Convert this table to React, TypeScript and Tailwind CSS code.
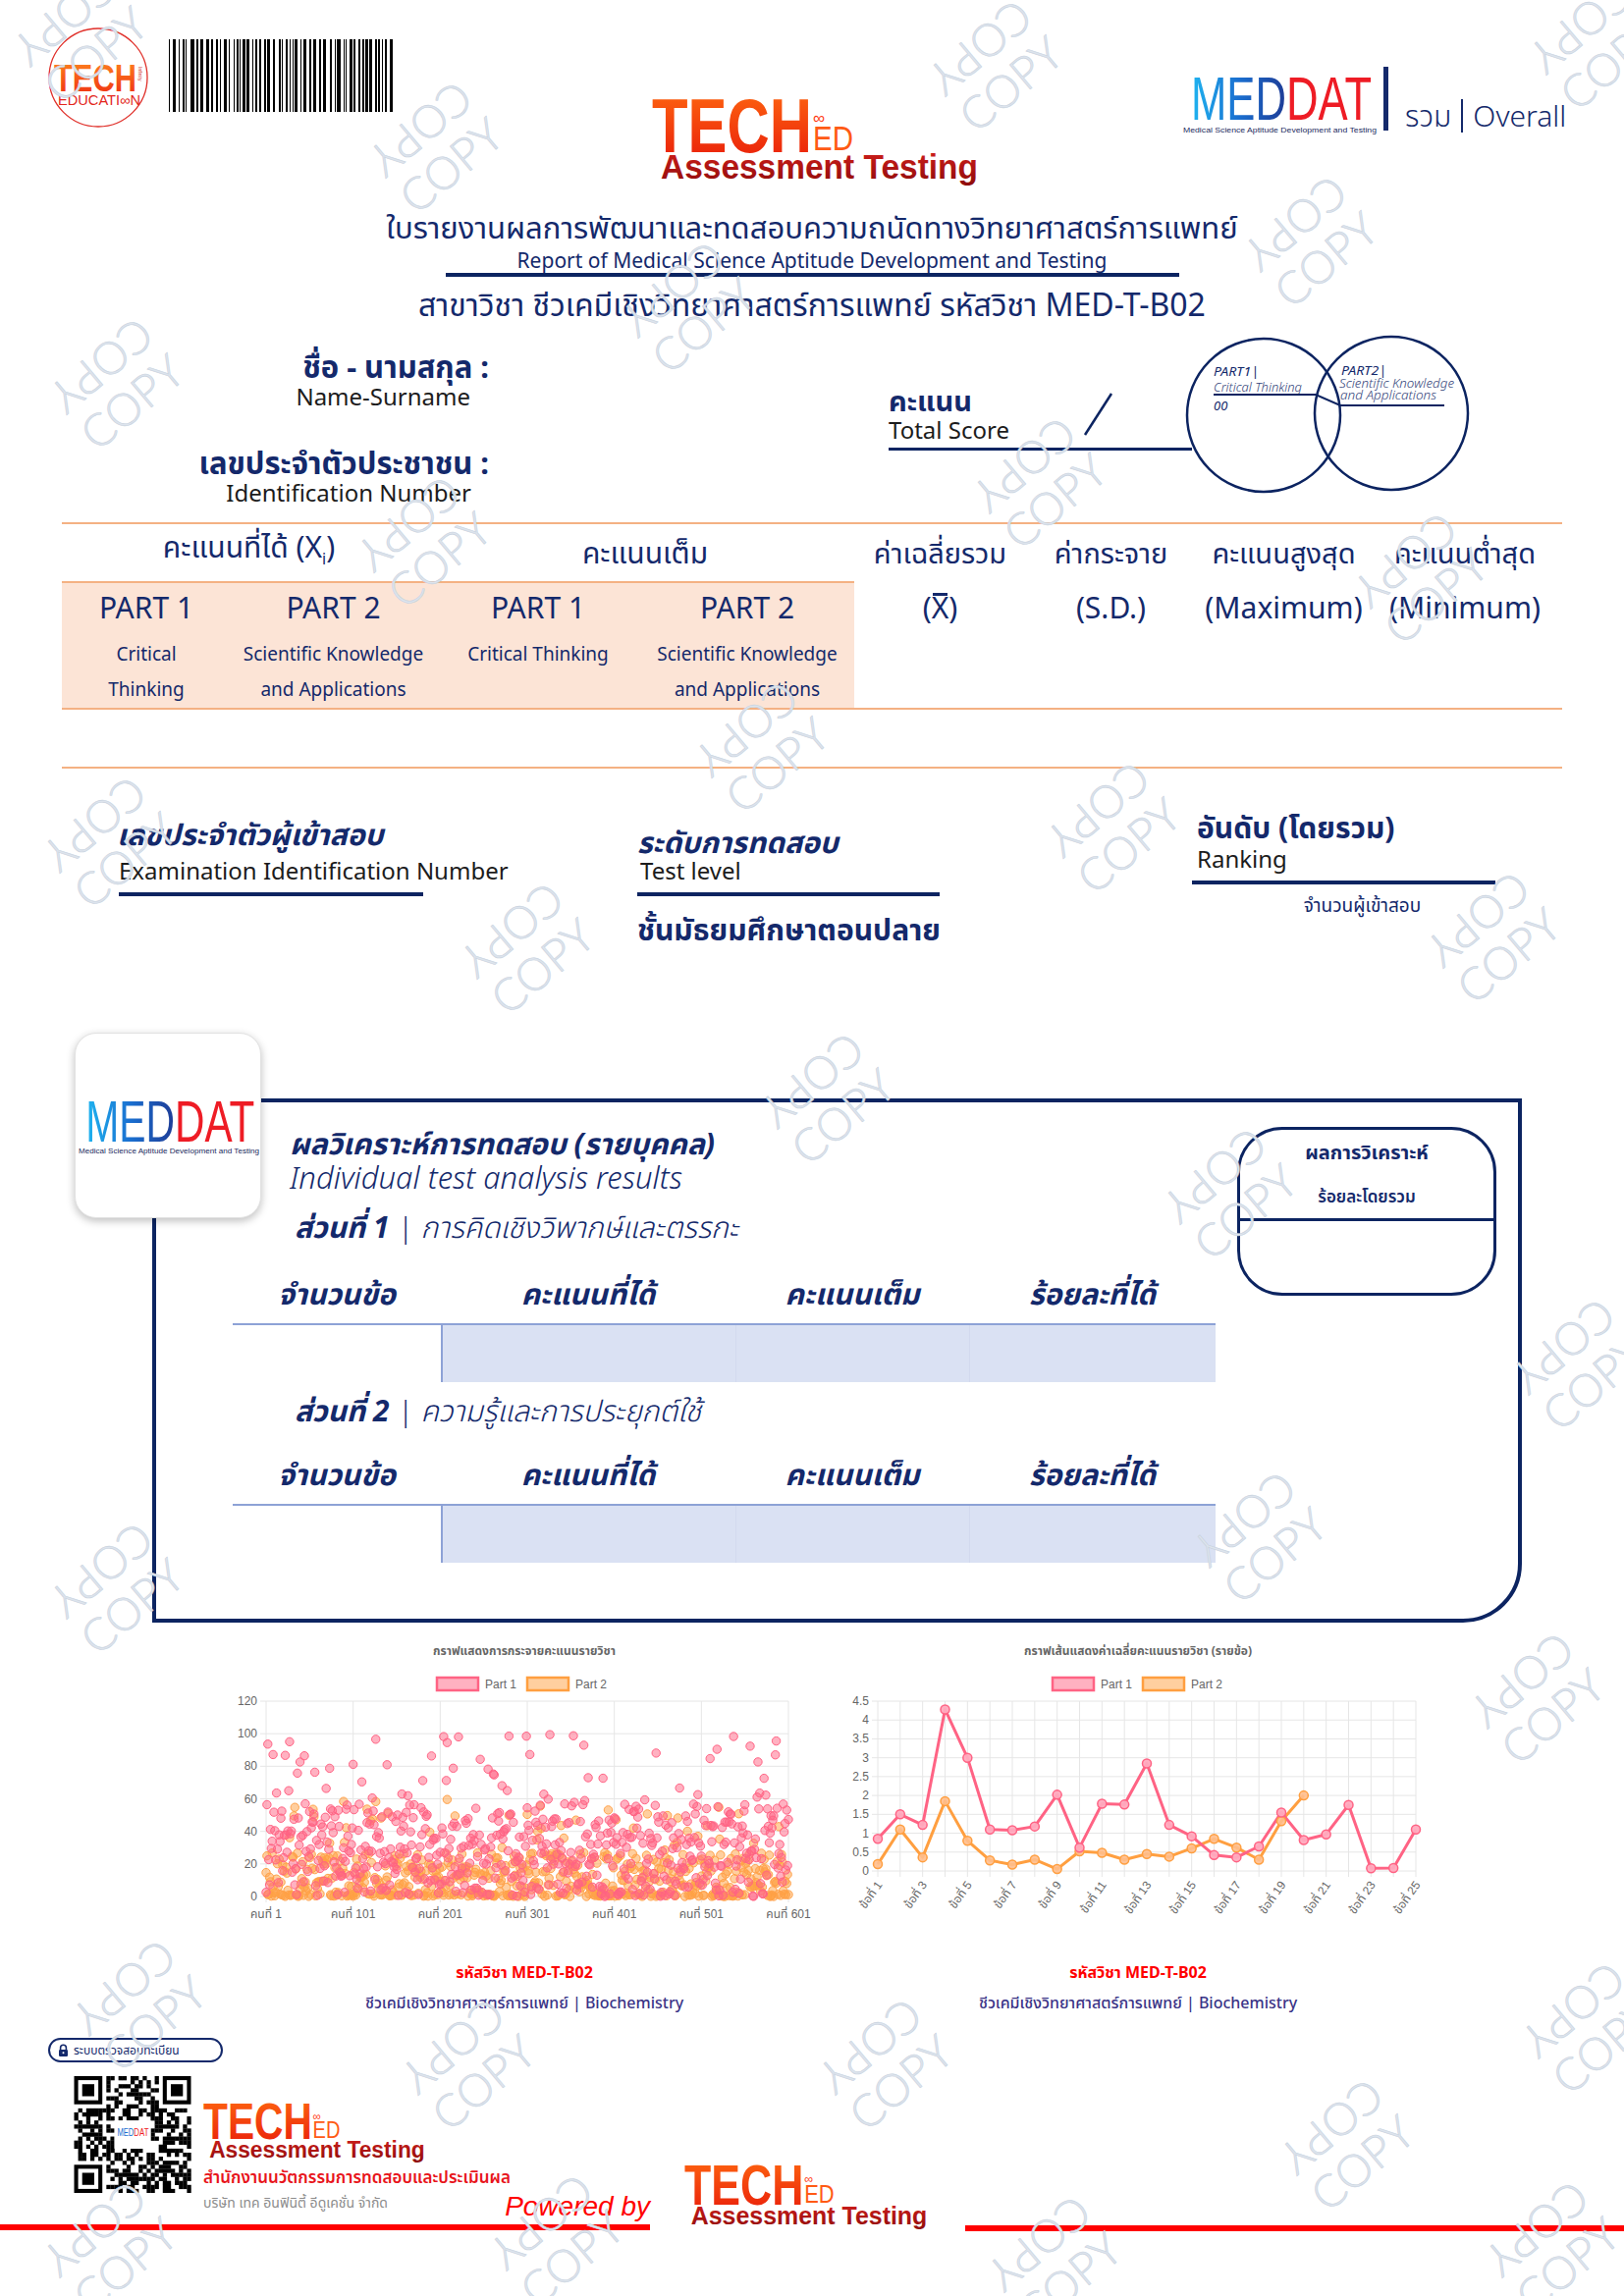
import React from 'react';

// deterministic pseudo random, so the drawing is the same on every load
function rng(seed: number) {
  let s = seed >>> 0;
  return () => {
    s = (s * 1664525 + 1013904223) % 4294967296;
    return s / 4294967296;
  };
}

const part1Avg = [0.85, 1.5, 1.22, 4.28, 3.0, 1.1, 1.08, 1.18, 2.02, 0.62, 1.78, 1.76, 2.85, 1.22, 0.92, 0.42, 0.36, 0.65, 1.55, 0.82, 0.97, 1.75, 0.07, 0.08, 1.1];
const part2Avg = [0.18, 1.1, 0.36, 1.85, 0.8, 0.28, 0.17, 0.3, 0.05, 0.52, 0.48, 0.3, 0.45, 0.38, 0.6, 0.85, 0.62, 0.3, 1.32, 2.0];

const scatter = (() => {
  const r = rng(2024);
  const p1: number[] = [];
  const p2: number[] = [];
  for (let i = 0; i < 601; i++) {
    const a = r();
    let v1: number;
    if (a < 0.08) v1 = r() * 3;
    else if (a < 0.2) v1 = 55 + r() * 45;
    else v1 = 3 + r() * 54;
    p1.push(v1);
    const b = r();
    let v2: number;
    if (b < 0.2) v2 = r() * 1.5;
    else if (b < 0.26) v2 = 28 + r() * 32;
    else v2 = 27 * Math.pow(r(), 1.15);
    p2.push(v2);
  }
  return { p1, p2 };
})();

const watermarks: [number, number][] = [
  [82, 37], [444, 150], [1014, 67], [1626, 45], [1335, 246], [119, 391], [701, 313],
  [1059, 492], [432, 552], [1447, 589], [776, 761], [112, 858], [1134, 843], [537, 966],
  [1521, 955], [843, 1119], [1253, 1216], [1608, 1390], [1283, 1566],
  [119, 1618], [1566, 1730], [142, 2043], [477, 2103], [902, 2103], [1372, 2185],
  [1618, 2066], [112, 2289], [567, 2282], [1074, 2304], [1581, 2289],
];

const thaiFont = 'Noto Sans, Noto Sans Thai, Liberation Sans, sans-serif';
const chartFont = 'Liberation Sans, Arial, Noto Sans Thai, sans-serif';

function Watermark({ x, y }: { x: number; y: number }) {
  return (
    <div
      className="pointer-events-none absolute w-[150px] -rotate-[40deg] text-center [font-family:'Lato','Liberation_Sans',sans-serif] text-[46px] font-light leading-[48px] text-[#dde4ed] [-webkit-text-stroke:0.6px_#c8d2de]"
      style={{ left: x - 75, top: y - 48 }}
    >
      <div className="rotate-180">COPY</div>
      <div>COPY</div>
    </div>
  );
}

function TechEduBadge() {
  return (
    <svg width="102" height="102" viewBox="0 0 102 102" className="block">
      <defs>
        <linearGradient id="teg" x1="0" y1="0" x2="0" y2="1">
          <stop offset="0" stopColor="#ff8a1f" />
          <stop offset="1" stopColor="#ee2a12" />
        </linearGradient>
      </defs>
      <circle cx="51" cy="51" r="50" fill="#fff" stroke="#e0302a" strokeWidth="1.3" />
      <text x="6" y="65" fontSize="39" fontWeight="700" textLength="84" lengthAdjust="spacingAndGlyphs" fill="url(#teg)" fontFamily={chartFont}>
        TECH
      </text>
      <text x="92" y="40" fontSize="5" fill="#d0302a" transform="rotate(90 92 40)" fontFamily={chartFont}>
        Infinity
      </text>
      <text x="10" y="79" fontSize="14" textLength="84" lengthAdjust="spacingAndGlyphs" fill="#e3261a" fontFamily={chartFont}>
        EDUCATI∞N
      </text>
    </svg>
  );
}

function Barcode() {
  const r = rng(7);
  const bars: { x: number; w: number }[] = [];
  let x = 0;
  while (x < 228) {
    const w = 1 + Math.floor(r() * 3.4);
    bars.push({ x, w: Math.min(w, 232 - x) });
    x += w + 1 + Math.floor(r() * 3.2);
  }
  return (
    <svg width="232" height="74" viewBox="0 0 232 74" className="block">
      {bars.map((b, i) => (
        <rect key={i} x={b.x} y={0} width={b.w} height={74} fill="#000" />
      ))}
    </svg>
  );
}

function TechLogo({ s }: { s: number }) {
  return (
    <svg width={340 * s} height={92 * s} viewBox="0 0 340 92" className="block overflow-visible">
      <defs>
        <linearGradient id="tlTech" x1="0" y1="0" x2="0" y2="1">
          <stop offset="0" stopColor="#ff6a10" />
          <stop offset="1" stopColor="#e81a0a" />
        </linearGradient>
        <linearGradient id="tlAss" x1="0" y1="0" x2="0" y2="1">
          <stop offset="0" stopColor="#d4201c" />
          <stop offset="1" stopColor="#8e0b0b" />
        </linearGradient>
      </defs>
      <text x="0" y="55" fontSize="77" fontWeight="700" textLength="163" lengthAdjust="spacingAndGlyphs" fill="url(#tlTech)" fontFamily={chartFont}>
        TECH
      </text>
      <text x="164" y="53" fontSize="35" textLength="41" lengthAdjust="spacingAndGlyphs" fill="#ff5a14" fontFamily={chartFont}>
        ED
      </text>
      <text x="164" y="26" fontSize="17" fill="#ff3a14" fontFamily={chartFont}>
        ∞
      </text>
      <text x="9" y="82" fontSize="35" fontWeight="700" textLength="323" lengthAdjust="spacingAndGlyphs" fill="url(#tlAss)" fontFamily={chartFont}>
        Assessment Testing
      </text>
    </svg>
  );
}

function Meddat({ s }: { s: number }) {
  return (
    <svg width={200 * s} height={70 * s} viewBox="0 0 200 70" className="block">
      <defs>
        <linearGradient id="mdBlue" gradientUnits="userSpaceOnUse" x1="10" y1="0" x2="107" y2="0">
          <stop offset="0" stopColor="#1fb4f0" />
          <stop offset="0.5" stopColor="#1a6fd0" />
          <stop offset="1" stopColor="#1e3c96" />
        </linearGradient>
      </defs>
      <text x="10" y="52" fontSize="63" textLength="97" lengthAdjust="spacingAndGlyphs" fill="url(#mdBlue)" fontFamily={chartFont}>
        MED
      </text>
      <text x="107" y="52" fontSize="63" textLength="87" lengthAdjust="spacingAndGlyphs" fill="#ee1c25" fontFamily={chartFont}>
        DAT
      </text>
      <text x="2" y="65" fontSize="8" textLength="197" lengthAdjust="spacingAndGlyphs" fill="#1b2a5e" fontFamily={chartFont}>
        Medical Science Aptitude Development and Testing
      </text>
    </svg>
  );
}

function Venn() {
  return (
    <svg width="300" height="168" viewBox="0 0 300 168" className="block">
      <circle cx="84" cy="85" r="78" fill="none" stroke="#0c2461" strokeWidth="2.5" />
      <circle cx="214" cy="83" r="78" fill="none" stroke="#0c2461" strokeWidth="2.5" />
      <g fontFamily={thaiFont} fontStyle="italic" fill="#14296b">
        <text x="33" y="45" fontSize="13" textLength="46" lengthAdjust="spacingAndGlyphs">PART1|</text>
        <text x="33" y="61" fontSize="12" fontWeight="300" textLength="90" lengthAdjust="spacingAndGlyphs" fill="#33447a">Critical Thinking</text>
        <text x="33" y="80" fontSize="13">00</text>
        <text x="163" y="44" fontSize="13" textLength="46" lengthAdjust="spacingAndGlyphs">PART2|</text>
        <text x="161" y="57" fontSize="12" fontWeight="300" textLength="117" lengthAdjust="spacingAndGlyphs" fill="#33447a">Scientific Knowledge</text>
        <text x="162" y="69" fontSize="12" fontWeight="300" textLength="98" lengthAdjust="spacingAndGlyphs" fill="#33447a">and Applications</text>
      </g>
      <polyline points="33,64 137,64 162,75 268,75" fill="none" stroke="#0c2461" strokeWidth="2" />
    </svg>
  );
}

function Legend({ a, b }: { a: number; b: number }) {
  return (
    <g fontFamily={chartFont} fontSize="12" fill="#666">
      <rect x={a} y={44} width={42} height={13} fill="rgba(255,99,132,0.5)" stroke="#ff6384" strokeWidth={2.5} />
      <text x={a + 49} y={55}>Part 1</text>
      <rect x={b} y={44} width={42} height={13} fill="rgba(255,159,64,0.5)" stroke="#ff9f40" strokeWidth={2.5} />
      <text x={b + 49} y={55}>Part 2</text>
    </g>
  );
}

function ScatterChart() {
  const x0 = 47;
  const x1 = 579;
  const y0 = 267;
  const yt = 68;
  const sx = (i: number) => x0 + (i / 600) * (x1 - x0);
  const sy = (v: number) => y0 - (v / 120) * (y0 - yt);
  return (
    <svg width="620" height="320" viewBox="0 0 620 320" className="block">
      <text x="310" y="21" textAnchor="middle" fontSize="12" fontWeight="700" fill="#666" fontFamily={thaiFont}>
        กราฟแสดงการกระจายคะแนนรายวิชา
      </text>
      <Legend a={221} b={313} />
      {[0, 20, 40, 60, 80, 100, 120].map((v) => (
        <g key={v}>
          <line x1={x0 - 6} x2={x1} y1={sy(v)} y2={sy(v)} stroke="#e6e6e6" strokeWidth={1} />
          <text x={x0 - 9} y={sy(v) + 4} textAnchor="end" fontSize="12" fill="#666" fontFamily={chartFont}>
            {v}
          </text>
        </g>
      ))}
      {[0, 1, 2, 3, 4, 5, 6].map((k) => (
        <g key={k}>
          <line x1={sx(k * 100)} x2={sx(k * 100)} y1={yt} y2={y0 + 6} stroke="#e6e6e6" strokeWidth={1} />
          <text x={sx(k * 100)} y={y0 + 22} textAnchor="middle" fontSize="12" fill="#666" fontFamily={chartFont}>
            {`คนที่ ${k * 100 + 1}`}
          </text>
        </g>
      ))}
      {scatter.p2.map((v, i) => (
        <circle key={'b' + i} cx={sx(i)} cy={sy(v)} r={4.2} fill="rgba(255,159,64,0.5)" stroke="#ffa24a" strokeWidth={1} />
      ))}
      {scatter.p1.map((v, i) => (
        <circle key={'a' + i} cx={sx(i)} cy={sy(v)} r={4.2} fill="rgba(255,99,132,0.5)" stroke="#ff6384" strokeWidth={1} />
      ))}
    </svg>
  );
}

function LineChart() {
  const x0 = 45;
  const x1 = 593;
  const y0 = 241;
  const yt = 68;
  const sx = (i: number) => x0 + (i * (x1 - x0)) / 24;
  const sy = (v: number) => y0 - (v / 4.5) * (y0 - yt);
  const ticks = [0, 0.5, 1, 1.5, 2, 2.5, 3, 3.5, 4, 4.5];
  const line = (d: number[]) => d.map((v, i) => `${sx(i)},${sy(v)}`).join(' ');
  return (
    <svg width="620" height="320" viewBox="0 0 620 320" className="block">
      <text x="310" y="21" textAnchor="middle" fontSize="12" fontWeight="700" fill="#666" fontFamily={thaiFont}>
        กราฟเส้นแสดงค่าเฉลี่ยคะแนนรายวิชา (รายข้อ)
      </text>
      <Legend a={223} b={315} />
      {ticks.map((v) => (
        <g key={v}>
          <line x1={x0 - 6} x2={x1} y1={sy(v)} y2={sy(v)} stroke="#e6e6e6" strokeWidth={1} />
          <text x={x0 - 9} y={sy(v) + 4} textAnchor="end" fontSize="12" fill="#666" fontFamily={chartFont}>
            {v}
          </text>
        </g>
      ))}
      {part1Avg.map((_, i) => (
        <line key={i} x1={sx(i)} x2={sx(i)} y1={yt} y2={y0 + 6} stroke="#e6e6e6" strokeWidth={1} />
      ))}
      {part1Avg.map((_, i) =>
        i % 2 === 0 ? (
          <text key={'l' + i} transform={`translate(${sx(i) + 5},${y0 + 14}) rotate(-55)`} textAnchor="end" fontSize="12" fill="#666" fontFamily={chartFont}>
            {`ข้อที่ ${i + 1}`}
          </text>
        ) : null
      )}
      <polyline points={line(part2Avg)} fill="none" stroke="#ff9f40" strokeWidth={3} strokeLinejoin="round" />
      <polyline points={line(part1Avg)} fill="none" stroke="#ff6384" strokeWidth={3} strokeLinejoin="round" />
      {part2Avg.map((v, i) => (
        <circle key={'o' + i} cx={sx(i)} cy={sy(v)} r={4.5} fill="rgba(255,190,140,0.9)" stroke="#ff9f40" strokeWidth={1.5} />
      ))}
      {part1Avg.map((v, i) => (
        <circle key={'p' + i} cx={sx(i)} cy={sy(v)} r={4.5} fill="rgba(255,170,190,0.95)" stroke="#ff6384" strokeWidth={1.5} />
      ))}
    </svg>
  );
}

function QRCode() {
  const n = 29;
  const m = 120 / n;
  const r = rng(99);
  const cells: React.ReactElement[] = [];
  const finder = (x: number, y: number) => (x < 8 && y < 8) || (x > n - 9 && y < 8) || (x < 8 && y > n - 9);
  for (let y = 0; y < n; y++) {
    for (let x = 0; x < n; x++) {
      if (finder(x, y)) continue;
      if (x >= 10 && x <= 18 && y >= 11 && y <= 17) continue;
      if (r() < 0.52) cells.push(<rect key={`${x}-${y}`} x={x * m} y={y * m} width={m + 0.2} height={m + 0.2} fill="#000" />);
    }
  }
  const fp = (x: number, y: number) => (
    <g key={`f${x}${y}`}>
      <rect x={x * m} y={y * m} width={7 * m} height={7 * m} fill="#000" />
      <rect x={(x + 1) * m} y={(y + 1) * m} width={5 * m} height={5 * m} fill="#fff" />
      <rect x={(x + 2) * m} y={(y + 2) * m} width={3 * m} height={3 * m} fill="#000" />
    </g>
  );
  return (
    <svg width="120" height="119" viewBox="0 0 120 120" className="block">
      <rect width="120" height="120" fill="#fff" />
      {cells}
      {fp(0, 0)}
      {fp(n - 7, 0)}
      {fp(0, n - 7)}
      <rect x={10 * m} y={11 * m} width={9 * m} height={7 * m} fill="#fff" />
      <g transform={`translate(${10.3 * m},${12.6 * m}) scale(0.175)`}>
        <text x="10" y="52" fontSize="63" textLength="97" lengthAdjust="spacingAndGlyphs" fill="#1a6fd0" fontFamily={chartFont}>MED</text>
        <text x="107" y="52" fontSize="63" textLength="87" lengthAdjust="spacingAndGlyphs" fill="#ee1c25" fontFamily={chartFont}>DAT</text>
      </g>
    </svg>
  );
}

function ScoreTable() {
  return (
    <div className="w-[1001px]">
      <div className="grid h-[62px] grid-cols-[212px_300px_238px_251px] items-center border-b-2 border-[#8da2d6] text-center text-[30px] font-bold italic leading-[40px]">
        <div>จำนวนข้อ</div>
        <div>คะแนนที่ได้</div>
        <div>คะแนนเต็ม</div>
        <div>ร้อยละที่ได้</div>
      </div>
      <div className="grid h-[58px] grid-cols-[212px_300px_238px_251px]">
        <div />
        <div className="border-l-2 border-[#8da2d6] bg-[#dae1f3]" />
        <div className="border-l border-[#d2d9ee] bg-[#dae1f3]" />
        <div className="border-l border-[#d2d9ee] bg-[#dae1f3]" />
      </div>
    </div>
  );
}

export default function App() {
  const statHead = ['ค่าเฉลี่ยรวม', 'ค่ากระจาย', 'คะแนนสูงสุด', 'คะแนนต่ำสุด'];
  const parts = [
    { t: 'PART 1', s: ['Critical', 'Thinking'] },
    { t: 'PART 2', s: ['Scientific Knowledge', 'and Applications'] },
    { t: 'PART 1', s: ['Critical Thinking'] },
    { t: 'PART 2', s: ['Scientific Knowledge', 'and Applications'] },
  ];

  return (
    <div className="relative h-[2339px] w-[1654px] overflow-hidden bg-white [font-family:'Noto_Sans','Noto_Sans_Thai',sans-serif] text-[#14296b]">
      {/* header logos */}
      <div className="flex h-[209px] items-start">
        <div className="ml-[49px] mt-[28px]">
          <TechEduBadge />
        </div>
        <div className="ml-[21px] mt-[40px]">
          <Barcode />
        </div>
        <div className="ml-[260px] mt-[100px]">
          <TechLogo s={1} />
        </div>
        <div className="ml-[199px] mt-[70px]">
          <Meddat s={1} />
        </div>
        <div className="ml-[6px] mt-[68px] h-[65px] w-[5px] bg-[#14296b]" />
        <div className="ml-[17px] mt-[98px] flex items-center text-[30px] font-light leading-[40px]">
          <span>รวม</span>
          <span className="mx-[10px] h-[34px] w-[2px] bg-[#14296b]" />
          <span>Overall</span>
        </div>
      </div>

      {/* titles */}
      <div className="text-center text-[31px] leading-[44px]">ใบรายงานผลการพัฒนาและทดสอบความถนัดทางวิทยาศาสตร์การแพทย์</div>
      <div className="text-center text-[21px] leading-[24px]">Report of Medical Science Aptitude Development and Testing</div>
      <div className="mx-auto mt-[1px] h-[4px] w-[747px] bg-[#0c2461]" />
      <div className="mt-[8px] text-center text-[32px] leading-[40px]">สาขาวิชา ชีวเคมีเชิงวิทยาศาสตร์การแพทย์ รหัสวิชา MED-T-B02</div>

      {/* personal info + total score */}
      <div className="flex h-[202px] items-start">
        <div className="w-[498px] pt-[25px] text-right">
          <div className="text-[31px] font-bold leading-[36px]">ชื่อ - นามสกุล :</div>
          <div className="pr-[19px] text-[24px] leading-[26px] text-[#1c1c1c]">Name-Surname</div>
          <div className="mt-[36px] text-[31px] font-bold leading-[36px]">เลขประจำตัวประชาชน :</div>
          <div className="pr-[18px] text-[24px] leading-[26px] text-[#1c1c1c]">Identification Number</div>
        </div>
        <div className="ml-[407px] flex items-start pt-[8px]">
          <div className="mt-[54px] flex h-[67px] w-[309px] items-start border-b-[3px] border-[#0c2461]">
            <div className="w-[195px]">
              <div className="text-[29px] font-bold leading-[32px]">คะแนน</div>
              <div className="text-[24px] leading-[28px] text-[#1c1c1c]">Total Score</div>
            </div>
            <svg width="36" height="56" className="block">
              <line x1="32" y1="9" x2="5" y2="51" stroke="#0c2461" strokeWidth="2.5" />
            </svg>
          </div>
          <div className="-ml-[11px]">
            <Venn />
          </div>
        </div>
      </div>

      {/* score summary table */}
      <div className="mx-[63px] grid grid-cols-[172px_209px_208px_218px_175px_173px_179px_190px] border-y-2 border-[#f4b183]">
        <div className="col-span-2 flex h-[58px] items-center justify-center text-[30px] leading-[40px]">
          <span>
            คะแนนที่ได้ (X<span className="align-sub text-[16px]">i</span>)
          </span>
        </div>
        <div className="col-span-2 flex h-[58px] items-center justify-center text-[30px] leading-[40px]">คะแนนเต็ม</div>
        {statHead.map((h) => (
          <div key={h} className="flex h-[58px] items-center justify-center text-[29px] leading-[40px]">
            {h}
          </div>
        ))}
        {parts.map((p, i) => (
          <div key={i} className="flex h-[129px] flex-col items-center border-t-2 border-[#f4b183] bg-[#fce4d6] pt-[6px]">
            <div className="text-[30px] leading-[38px]">{p.t}</div>
            <div className="mt-[10px] text-center text-[19px] leading-[36px]">
              {p.s.map((l) => (
                <div key={l}>{l}</div>
              ))}
            </div>
          </div>
        ))}
        <div className="h-[129px] pt-[8px] text-center text-[30px] leading-[38px]">
          (
          <span className="relative inline-block">
            X<span className="absolute left-[1px] right-[1px] top-[4px] h-[3px] bg-[#14296b]" />
          </span>
          )
        </div>
        <div className="h-[129px] pt-[8px] text-center text-[30px] leading-[38px]">(S.D.)</div>
        <div className="h-[129px] pt-[8px] text-center text-[30px] leading-[38px]">(Maximum)</div>
        <div className="h-[129px] pt-[8px] text-center text-[30px] leading-[38px]">(Minimum)</div>
      </div>
      <div className="mx-[63px] h-[60px] border-b-2 border-[#f4b183]" />

      {/* exam info */}
      <div className="flex h-[269px] items-start pl-[119px]">
        <div className="w-[530px] pt-[47px]">
          <div className="text-[30px] font-bold italic leading-[40px]">เลขประจำตัวผู้เข้าสอบ</div>
          <div className="mt-[3px] pl-[2px] text-[24px] leading-[28px] text-[#1c1c1c]">Examination Identification Number</div>
          <div className="ml-[2px] mt-[8px] h-[4px] w-[310px] bg-[#0c2461]" />
        </div>
        <div className="w-[565px] pt-[55px]">
          <div className="text-[30px] font-bold italic leading-[40px]">ระดับการทดสอบ</div>
          <div className="-mt-[5px] pl-[3px] text-[24px] leading-[28px] text-[#1c1c1c]">Test level</div>
          <div className="mt-[8px] h-[4px] w-[308px] bg-[#0c2461]" />
          <div className="mt-[14px] text-[30px] font-bold leading-[40px]">ชั้นมัธยมศึกษาตอนปลาย</div>
        </div>
        <div className="w-[309px] pt-[42px]">
          <div className="pl-[5px] text-[30px] font-bold leading-[36px]">อันดับ (โดยรวม)</div>
          <div className="pl-[5px] text-[24px] leading-[28px] text-[#1c1c1c]">Ranking</div>
          <div className="mt-[8px] h-[4px] w-[309px] bg-[#0c2461]" />
          <div className="mt-[9px] pl-[38px] text-center text-[19px] leading-[24px]">จำนวนผู้เข้าสอบ</div>
        </div>
      </div>

      {/* individual analysis box */}
      <div className="relative h-[601px] pt-[67px]">
        <div className="absolute left-[76px] top-0 z-10 flex h-[189px] w-[190px] items-center justify-center rounded-[22px] border border-[#e2e2e2] bg-white shadow-[0_3px_8px_rgba(0,0,0,0.25)]">
          <Meddat s={0.935} />
        </div>
        <div className="ml-[155px] flex h-[534px] w-[1395px] rounded-br-[60px] border-4 border-[#0c2461]">
          <div className="w-[1079px] pl-[78px]">
            <div className="ml-[58px] pt-[22px] text-[30px] font-bold italic leading-[40px]">ผลวิเคราะห์การทดสอบ (รายบุคคล)</div>
            <div className="-mt-[3px] ml-[58px] text-[31px] font-light italic leading-[34px]">Individual test analysis results</div>
            <div className="ml-[63px] mt-[14px] leading-[40px]">
              <span className="text-[30px] font-bold italic">ส่วนที่ 1</span>
              <span className="text-[30px] font-light italic"> | การคิดเชิงวิพากษ์และตรรกะ</span>
            </div>
            <div className="mt-[13px]">
              <ScoreTable />
            </div>
            <div className="ml-[63px] mt-[9px] leading-[40px]">
              <span className="text-[30px] font-bold italic">ส่วนที่ 2</span>
              <span className="text-[30px] font-light italic"> | ความรู้และการประยุกต์ใช้</span>
            </div>
            <div className="mt-[10px]">
              <ScoreTable />
            </div>
          </div>
          <div className="ml-[22px] mt-[25px] flex h-[172px] w-[264px] flex-col rounded-[46px] border-[3px] border-[#0c2461]">
            <div className="flex h-[93px] flex-col items-center border-b-[3px] border-[#0c2461] pt-[9px]">
              <div className="text-[20px] font-bold leading-[28px]">ผลการวิเคราะห์</div>
              <div className="mt-[17px] text-[17px] font-semibold leading-[28px]">ร้อยละโดยรวม</div>
            </div>
          </div>
        </div>
      </div>

      {/* charts */}
      <div className="mt-[12px] flex">
        <div className="ml-[224px] w-[620px]">
          <ScatterChart />
          <div className="mt-[12px] text-center text-[16px] font-bold leading-[24px] text-[#ff0000]">รหัสวิชา MED-T-B02</div>
          <div className="mt-[7px] text-center text-[16px] font-medium leading-[24px] text-[#3b3487]">ชีวเคมีเชิงวิทยาศาสตร์การแพทย์ | Biochemistry</div>
        </div>
        <div className="ml-[5px] w-[620px]">
          <LineChart />
          <div className="mt-[12px] text-center text-[16px] font-bold leading-[24px] text-[#ff0000]">รหัสวิชา MED-T-B02</div>
          <div className="mt-[7px] text-center text-[16px] font-medium leading-[24px] text-[#3b3487]">ชีวเคมีเชิงวิทยาศาสตร์การแพทย์ | Biochemistry</div>
        </div>
      </div>

      {/* footer */}
      <div className="ml-[49px] mt-[24px] flex h-[25px] w-[178px] items-center gap-[5px] rounded-full border-2 border-[#14296b] px-[8px] text-[12px] leading-none">
        <svg width="11" height="13" viewBox="0 0 11 13" className="block shrink-0">
          <path d="M2.6 6.2V4.1a2.9 2.9 0 0 1 5.8 0v2.1" fill="none" stroke="#14296b" strokeWidth="1.6" />
          <rect x="1" y="6" width="9" height="7" rx="1.2" fill="#14296b" />
          <circle cx="5.5" cy="9.3" r="1" fill="#fff" />
        </svg>
        <span className="whitespace-nowrap">ระบบตรวจสอบทะเบียน</span>
      </div>
      <div className="mt-[14px] flex items-start">
        <div className="flex h-[157px] w-[662px] items-start border-b-[6px] border-[#ff0000]">
          <div className="ml-[75px]">
            <QRCode />
          </div>
          <div className="ml-[12px] mt-[27px] w-[300px] whitespace-nowrap">
            <TechLogo s={0.68} />
            <div className="mt-[2px] text-[17px] font-semibold leading-[22px] text-[#e8141b]">สำนักงานนวัตกรรมการทดสอบและประเมินผล</div>
            <div className="mt-[5px] text-[14px] leading-[20px] text-[#8c8c8c]">บริษัท เทค อินฟินิตี้ อีดูเคชั่น จำกัด</div>
          </div>
          <div className="ml-auto mt-[118px] whitespace-nowrap [font-family:'Liberation_Sans',sans-serif] text-[28px] italic leading-[30px] text-[#ff0000]">
            Powered by
          </div>
        </div>
        <div className="ml-[35px] mt-[90px]">
          <TechLogo s={0.745} />
        </div>
        <div className="ml-[33px] mt-[152px] h-[6px] flex-1 bg-[#ff0000]" />
      </div>

      {watermarks.map(([x, y], i) => (
        <Watermark key={i} x={x} y={y} />
      ))}
    </div>
  );
}
